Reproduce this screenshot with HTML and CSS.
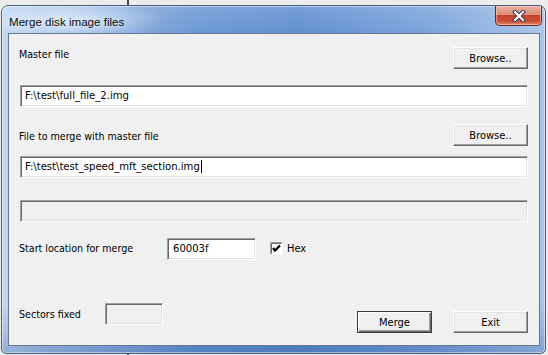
FILE: index.html
```html
<!DOCTYPE html>
<html>
<head>
<meta charset="utf-8">
<link rel="stylesheet" href="styles.css">
</head>
<body>
<div class="window">
  <div class="titlebar">
    <span class="title">Merge disk image files</span>
    <div class="close">
      <svg width="14" height="12" viewBox="0 0 14 12">
        <path d="M3 2 L11 10 M11 2 L3 10" stroke="#3a3a4a" stroke-width="4.2" stroke-linecap="square" fill="none"/>
        <path d="M3 2 L11 10 M11 2 L3 10" stroke="#ffffff" stroke-width="2.2" stroke-linecap="square" fill="none"/>
      </svg>
    </div>
  </div>
  <div class="client">
    <div class="row row1">
      <span class="label lbl-top">Master file</span>
      <button class="btn">Browse..</button>
    </div>
    <div class="edit wide e1">F:\test\full_file_2.img</div>
    <div class="row row2">
      <span class="label lbl-mid">File to merge with master file</span>
      <button class="btn">Browse..</button>
    </div>
    <div class="edit wide e2"><span class="caret">F:\test\test_speed_mft_section.img</span></div>
    <div class="edit wide disabled progress"></div>
    <div class="row row3">
      <span class="label lbl-start">Start location for merge</span>
      <div class="edit small">60003f</div>
      <span class="check">
        <svg width="13" height="13" viewBox="0 0 13 13">
          <rect x="0" y="0" width="13" height="13" fill="#ffffff"/>
          <path d="M0.5 12.5 V0.5 H12.5" stroke="#a0a0a0" fill="none"/>
          <path d="M1.5 11.5 V1.5 H11.5" stroke="#696969" fill="none"/>
          <path d="M3 6 L5 8.5 L10 3.5" stroke="#000" stroke-width="2.2" fill="none"/>
        </svg>
      </span>
      <span class="label hex">Hex</span>
    </div>
    <div class="row row4">
      <span class="label lbl-sec">Sectors fixed</span>
      <div class="edit disabled sect"></div>
      <div class="buttons">
        <button class="btn default">Merge</button>
        <button class="btn">Exit</button>
      </div>
    </div>
  </div>
</div>
</body>
</html>
```
FILE: styles.css
```css
html, body {
  margin: 0;
  padding: 0;
}
body {
  width: 548px;
  height: 355px;
  overflow: hidden;
  background:
    linear-gradient(90deg, transparent 127px, #4a4a4a 127px, #4a4a4a 129px, transparent 129px),
    #ececec;
  font-family: "DejaVu Sans Condensed", "DejaVu Sans", sans-serif;
  font-size: 10.6px;
  color: #000;
}
.window {
  box-sizing: border-box;
  margin: 5px 0 0 1px;
  width: 545px;
  height: 349px;
  border: 1px solid #4c5f7a;
  border-radius: 7px 7px 5px 5px;
  background:
    linear-gradient(180deg, rgba(255,255,255,0.15) 0, rgba(255,255,255,0) 30px, rgba(0,30,90,0) 300px, rgba(20,60,140,0.25) 100%),
    linear-gradient(90deg, #c2d7ef 0, #a9c5e9 8%, #6b98d3 35%, #5f8ecf 55%, #7ca5dc 80%, #a9c5ea 100%);
  box-shadow: inset 0 0 0 1px rgba(255,255,255,0.45);
  display: flex;
  flex-direction: column;
  padding: 0 5px 7px 6px;
}
.titlebar {
  height: 27px;
  display: flex;
  align-items: flex-start;
  margin: 0 -5px 0 -6px;
  padding-left: 7px;
  padding-right: 3px;
  background: radial-gradient(ellipse 95px 20px at 65px 14px, rgba(225,238,252,0.85), rgba(225,238,252,0) 100%);
}
.title {
  font-family: "Liberation Sans", Arial, sans-serif;
  font-size: 11.6px;
  color: #0b0b0b;
  margin-top: 9px;
  line-height: 14px;
  text-shadow: 0 0 6px rgba(255,255,255,0.9);
}
.close {
  margin-left: auto;
  width: 47px;
  height: 20px;
  box-sizing: border-box;
  border: 1px solid #6a2a22;
  border-top: none;
  border-radius: 0 0 5px 5px;
  background: linear-gradient(180deg, #eab0a2 0, #de8d79 45%, #c5432b 50%, #c84f36 80%, #e08c72 100%);
  box-shadow: inset 0 0 0 1px rgba(255,220,210,0.5);
  display: flex;
  align-items: center;
  justify-content: center;
}
.close svg {
  display: block;
  margin-top: 1px;
}
.client {
  flex: 1;
  box-sizing: border-box;
  background: #f0f0f0;
  border: 1px solid #67778f;
  display: flex;
  flex-direction: column;
  padding: 0 11px 0 11px;
}
.row {
  display: flex;
  align-items: flex-start;
  height: 22px;
}
.label {
  line-height: 14px;
  white-space: nowrap;
}
.row1 { margin-top: 13px; }
.lbl-top { margin-top: 0; margin-left: -1px; }
.row2 { margin-top: 17px; }
.lbl-mid { margin-top: 5px; margin-left: -1px; }
.btn {
  margin-left: auto;
  box-sizing: border-box;
  width: 75px;
  height: 22px;
  padding: 0;
  font-family: "DejaVu Sans Condensed", "DejaVu Sans", sans-serif;
  font-size: 11px;
  color: #000;
  background: #f0f0f0;
  border: 1px solid;
  border-color: #ffffff #696969 #696969 #ffffff;
  box-shadow: inset -1px -1px 0 #a0a0a0, inset 1px 1px 0 #e3e3e3;
  border-radius: 0;
}
.btn.default {
  border: 1px solid #3c3c3c;
  box-shadow: inset 1px 1px 0 #ffffff, inset -1px -1px 0 #696969, inset -2px -2px 0 #a0a0a0;
}
.edit {
  box-sizing: border-box;
  height: 22px;
  background: #ffffff;
  border: 1px solid;
  border-color: #a0a0a0 #ffffff #ffffff #a0a0a0;
  box-shadow: inset 1px 1px 0 #696969, inset -1px -1px 0 #e3e3e3;
  padding: 2px 4px 0 4px;
  line-height: 15px;
  font-size: 11.2px;
  white-space: nowrap;
}
.wide { width: 508px; }
.e1 { margin-top: 16px; }
.e2 { margin-top: 10px; }
.caret {
  border-right: 1px solid #000;
  padding-right: 1px;
}
.disabled {
  background: #f0f0f0;
}
.progress { margin-top: 22px; }
.row3 { margin-top: 16px; }
.lbl-start { width: 148px; margin-left: -1px; margin-top: 3px; }
.small { width: 89px; padding-left: 5px; }
.check {
  margin-left: 14px;
  margin-top: 4px;
  width: 13px;
  height: 13px;
}
.check svg { display: block; }
.hex { margin-left: 4px; margin-top: 4px; font-size: 11px; }
.row4 {
  margin-top: 43px;
  height: 30px;
}
.lbl-sec { width: 86px; margin-left: -1px; margin-top: 4px; }
.sect { width: 58px; }
.buttons {
  margin-left: auto;
  margin-top: 8px;
  display: flex;
  gap: 21px;
}
.buttons .btn { margin-left: 0; }
```
